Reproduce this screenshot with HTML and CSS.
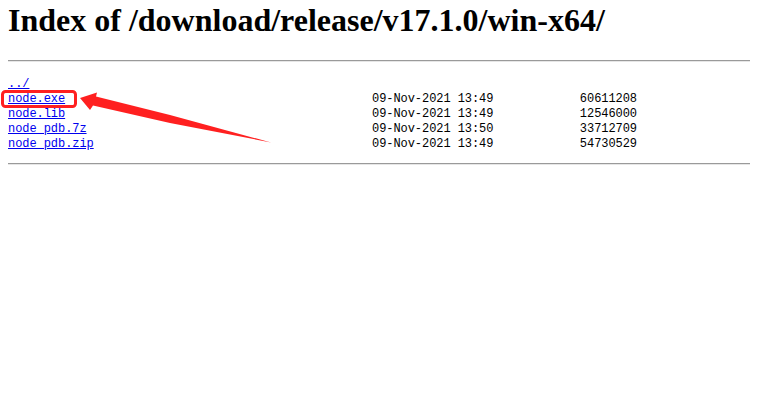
FILE: index.html
```html
<!DOCTYPE html>
<html>
<head>
<meta charset="utf-8">
<title>Index of /download/release/v17.1.0/win-x64/</title>
<link rel="stylesheet" href="styles.css">
</head>
<body>
<h1 class="title">Index of /download/release/v17.1.0/win-x64/</h1>
<hr class="rule">
<div class="listing">
  <a class="name" href="../">../</a><span></span><span></span>
  <a class="name" href="node.exe">node.exe</a><span class="date">09-Nov-2021 13:49</span><span class="size">60611208</span>
  <a class="name" href="node.lib">node.lib</a><span class="date">09-Nov-2021 13:49</span><span class="size">12546000</span>
  <a class="name" href="node_pdb.7z">node_pdb.7z</a><span class="date">09-Nov-2021 13:50</span><span class="size">33712709</span>
  <a class="name" href="node_pdb.zip">node_pdb.zip</a><span class="date">09-Nov-2021 13:49</span><span class="size">54730529</span>
</div>
<hr class="rule">
<svg class="annotation" width="300" height="160" viewBox="0 0 300 160" xmlns="http://www.w3.org/2000/svg">
  <rect x="2.5" y="91.5" width="73" height="15" rx="3" ry="3" fill="none" stroke="#ff2020" stroke-width="3"/>
  <polygon fill="#ff2020" points="80,98 97,92.5 96,96.5 170,115 271,142.5 170,123 93,105.5 90,110"/>
</svg>
</body>
</html>
```

FILE: styles.css
```css
html, body {
  background: #ffffff;
}
body {
  margin: 0;
  padding: 0 8px;
  color: #000000;
  font-family: "Liberation Serif", "Times New Roman", serif;
  position: relative;
}
.title {
  font-size: 32px;
  line-height: 37px;
  font-weight: bold;
  margin: 2px 0 21px;
}
.rule {
  margin: 0;
  height: 0;
  border: 0;
  border-top: 1px solid #9a9a9a;
  border-bottom: 1px solid #e6e6e6;
}
.listing {
  display: grid;
  grid-template-columns: 364px 122px 143px;
  margin: 15px 0 11px;
  font-family: "Liberation Mono", "Courier New", monospace;
  font-size: 12px;
  letter-spacing: -0.06px;
  line-height: 15px;
  white-space: pre;
}
.name {
  color: #0000ee;
  text-decoration: underline;
}
.size {
  text-align: right;
}
.annotation {
  position: absolute;
  left: 0;
  top: 0;
}
```
